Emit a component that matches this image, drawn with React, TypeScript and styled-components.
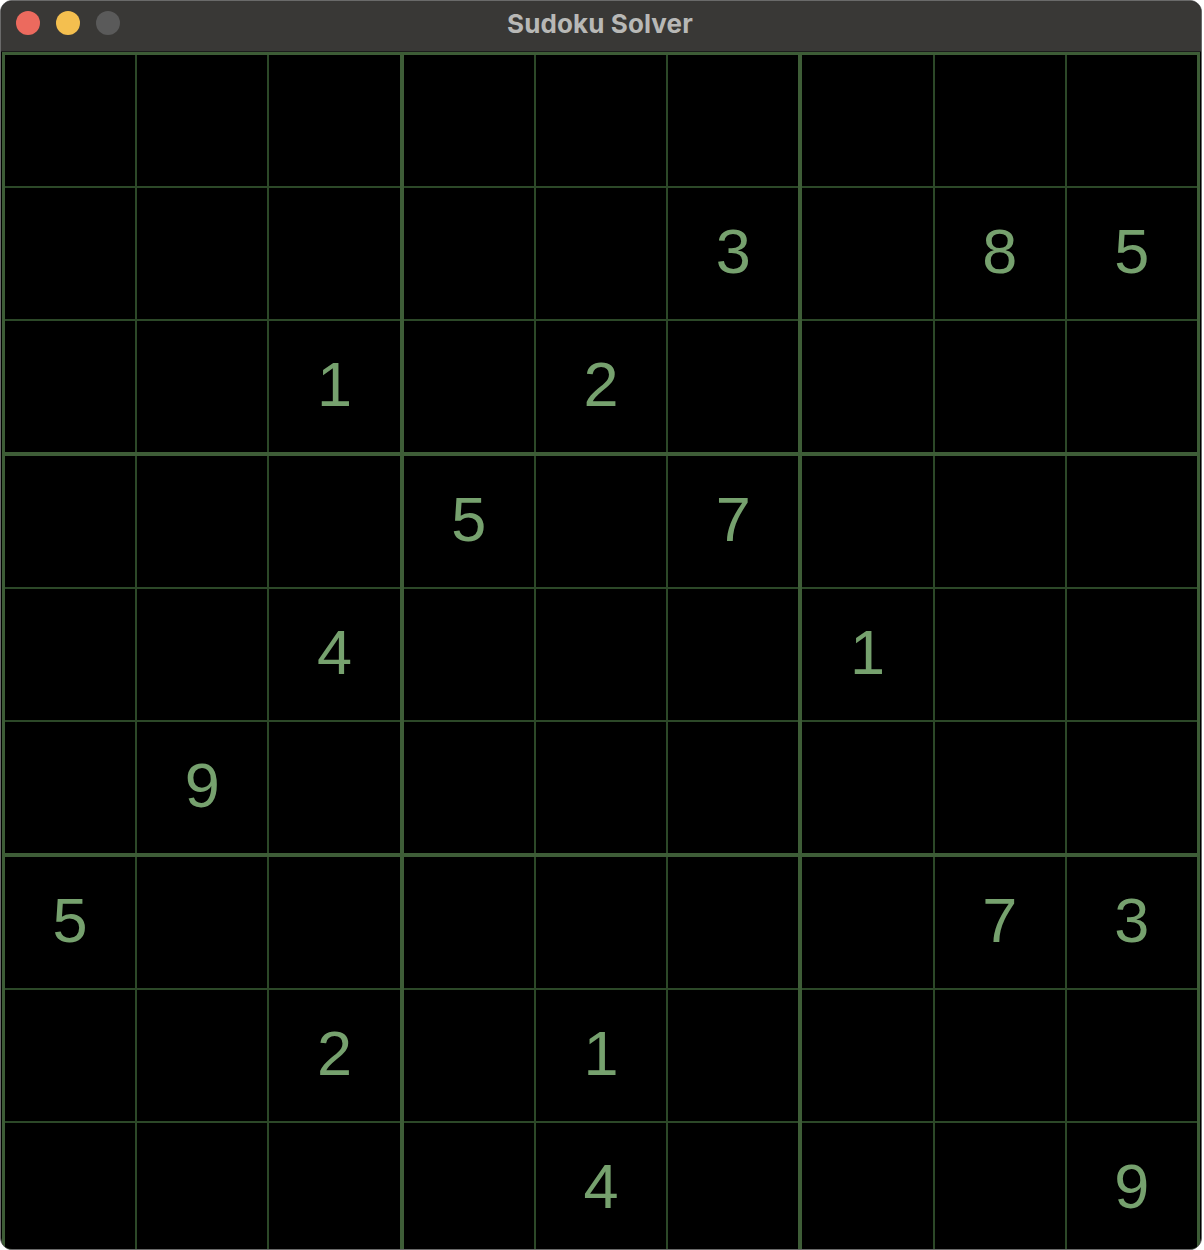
import React from "react";
import styled, { createGlobalStyle } from "styled-components";

const Global = createGlobalStyle`
  html, body { margin: 0; padding: 0; background: #ffffff; }
  body { font-family: "Liberation Sans", Arial, sans-serif; }
`;

const Window = styled.div`
  width: 1202px;
  height: 1250px;
  box-sizing: border-box;
  border: 1px solid #6a6a6a;
  border-radius: 12px;
  overflow: hidden;
  background: #000;
  display: flex;
  flex-direction: column;
`;

const TitleBar = styled.div`
  height: 51px;
  flex: none;
  background: #393836;
  border-bottom: 1px solid #1c1c1c;
  display: flex;
  align-items: center;
  position: relative;
  padding-left: 15px;
  padding-bottom: 6px;
  box-sizing: border-box;
  gap: 16px;
`;

const Light = styled.span<{ $c: string }>`
  width: 24px;
  height: 24px;
  border-radius: 50%;
  background: ${(p) => p.$c};
`;

const Title = styled.div`
  position: absolute;
  left: 0;
  right: 0;
  top: 0;
  bottom: 6px;
  display: flex;
  align-items: center;
  justify-content: center;
  font-family: "Inter", "Liberation Sans", sans-serif;
  font-weight: 700;
  font-size: 26px;
  letter-spacing: 0.1px;
  color: #b8b8b6;
  pointer-events: none;
  margin-left: -2px;
`;

const Board = styled.div`
  margin-left: 1px;
  width: 1198px;
  height: 1205px;
  box-sizing: border-box;
  border: 3px solid #3d5c36;
  background: #3e5d37;
  display: grid;
  grid-template-columns: repeat(3, 1fr);
  grid-template-rows: repeat(3, 1fr);
  gap: 4px;
  flex: none;
`;

const Box = styled.div`
  background: #2c4828;
  display: grid;
  grid-template-columns: repeat(3, 1fr);
  grid-template-rows: repeat(3, 1fr);
  gap: 2px;
`;

const Cell = styled.div`
  background: #000;
  display: flex;
  align-items: center;
  justify-content: center;
  padding-bottom: 4px;
  box-sizing: border-box;
  font-family: "Liberation Sans", Arial, sans-serif;
  font-size: 63px;
  color: #76a16e;
  line-height: 1;
`;

const puzzle: number[][] = [
  [0, 0, 0, 0, 0, 0, 0, 0, 0],
  [0, 0, 0, 0, 0, 3, 0, 8, 5],
  [0, 0, 1, 0, 2, 0, 0, 0, 0],
  [0, 0, 0, 5, 0, 7, 0, 0, 0],
  [0, 0, 4, 0, 0, 0, 1, 0, 0],
  [0, 9, 0, 0, 0, 0, 0, 0, 0],
  [5, 0, 0, 0, 0, 0, 0, 7, 3],
  [0, 0, 2, 0, 1, 0, 0, 0, 0],
  [0, 0, 0, 0, 4, 0, 0, 0, 9],
];

export default function App() {
  const boxes = [];
  for (let br = 0; br < 3; br++) {
    for (let bc = 0; bc < 3; bc++) {
      const cells = [];
      for (let r = 0; r < 3; r++) {
        for (let c = 0; c < 3; c++) {
          const v = puzzle[br * 3 + r][bc * 3 + c];
          cells.push(<Cell key={`${r}-${c}`}>{v ? v : ""}</Cell>);
        }
      }
      boxes.push(<Box key={`${br}-${bc}`}>{cells}</Box>);
    }
  }
  return (
    <>
      <Global />
      <Window>
        <TitleBar>
          <Light $c="#ec6a5e" />
          <Light $c="#f4bf4f" />
          <Light $c="#5a5a5a" />
          <Title>Sudoku Solver</Title>
        </TitleBar>
        <Board>{boxes}</Board>
      </Window>
    </>
  );
}
